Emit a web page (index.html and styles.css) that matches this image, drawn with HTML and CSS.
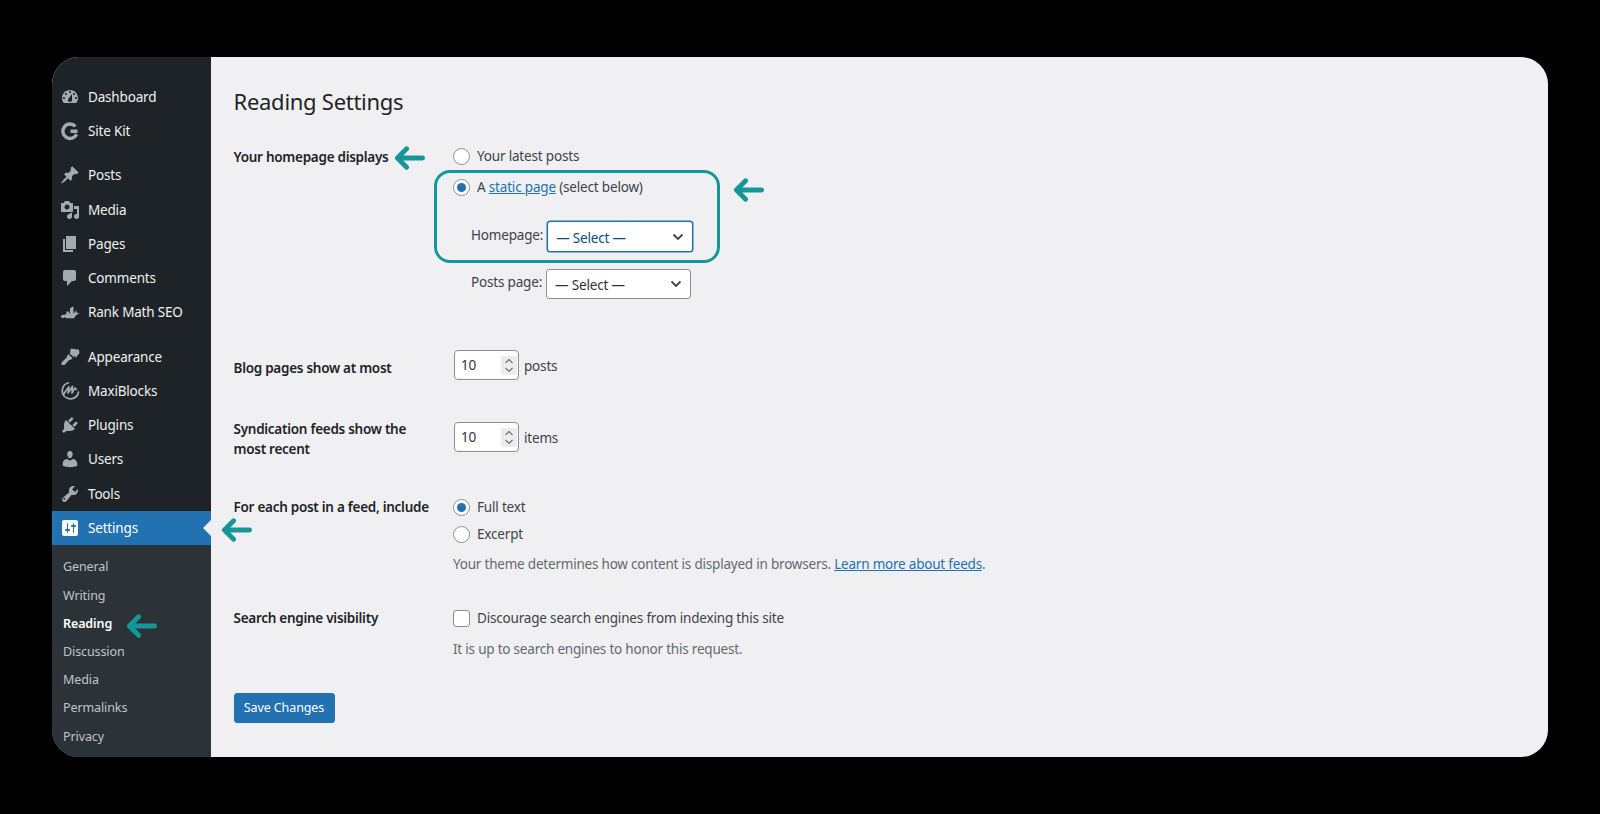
FILE: index.html
```html
<!DOCTYPE html>
<html lang="en">
<head>
<meta charset="utf-8">
<title>Reading Settings</title>
<link rel="stylesheet" href="styles.css">
</head>
<body>
<svg class="defs" width="0" height="0" aria-hidden="true">
  <symbol id="arrow" viewBox="0 0 32 26"><path d="M29.500 13H4M13 3.500L3.500 13l9.500 9.500" fill="none" stroke="currentColor" stroke-width="5" stroke-linecap="round" stroke-linejoin="round"/></symbol>
</svg>
<div class="window">
  <nav class="sidebar">
    <ul class="menu">
      <li class="item"><svg class="icon" viewBox="0 0 20 20"><path fill-rule="evenodd" d="M3.760 16h12.480c1.100-1.370 1.760-3.110 1.760-5 0-4.420-3.580-8-8-8s-8 3.580-8 8c0 1.890.66 3.630 1.760 5zM10 4c.55 0 1 .45 1 1s-.45 1-1 1-1-.45-1-1 .45-1 1-1zM6 6c.55 0 1 .45 1 1s-.45 1-1 1-1-.45-1-1 .45-1 1-1zm8 0c.55 0 1 .45 1 1s-.45 1-1 1-1-.45-1-1 .45-1 1-1zm-5.370 5.550L12 7v6c0 1.100-.9 2-2 2s-2-.9-2-2c0-.57.24-1.080.63-1.450zM4 10c.55 0 1 .45 1 1s-.45 1-1 1-1-.45-1-1 .45-1 1-1zm12 0c.55 0 1 .45 1 1s-.45 1-1 1-1-.45-1-1 .45-1 1-1z"/></svg>Dashboard</li>
      <li class="item"><svg class="icon" viewBox="0 0 20 20"><path class="stroke-g" d="M15.400 5.400A7.200 7.200 0 1 0 16.600 13.200M10.500 10.300H17.500"/></svg>Site Kit</li>
      <li class="item gap"><svg class="icon" viewBox="0 0 20 20"><path d="M10.440 3.020l1.820-1.820 6.360 6.350-1.830 1.820c-1.050-.68-2.480-.57-3.410.36l-.75.75c-.92.93-1.040 2.350-.35 3.410l-1.830 1.820-2.410-2.410-2.800 2.790c-.42.42-3.380 2.710-3.800 2.290s1.860-3.390 2.280-3.810l2.790-2.790L4.100 9.360l1.830-1.820c1.050.69 2.480.57 3.400-.36l.75-.75c.93-.92 1.050-2.350.36-3.410z"/></svg>Posts</li>
      <li class="item"><svg class="icon" viewBox="0 0 20 20"><path fill-rule="evenodd" d="M13 11V4c0-.55-.45-1-1-1h-1.670L9 1H5L3.670 3H2c-.55 0-1 .45-1 1v7c0 .55.45 1 1 1h10c.55 0 1-.45 1-1zM7 4.500c1.380 0 2.500 1.120 2.500 2.500S8.380 9.500 7 9.500 4.500 8.380 4.500 7 5.620 4.500 7 4.500zM14 6h5v10.500c0 1.380-1.120 2.500-2.500 2.500S14 17.880 14 16.500s1.120-2.500 2.500-2.500c.17 0 .34.020.5.050V9h-3V6zm-4 8.050V13h2v3.500c0 1.380-1.120 2.500-2.500 2.500S7 17.880 7 16.500 8.120 14 9.500 14c.17 0 .34.020.5.050z"/></svg>Media</li>
      <li class="item"><svg class="icon" viewBox="0 0 20 20"><path d="M6 15V2h10v13H6zm-1 1h8v2H3V5h2v11z"/></svg>Pages</li>
      <li class="item"><svg class="icon" viewBox="0 0 20 20"><path d="M5 2h9c1.100 0 2 .9 2 2v7c0 1.100-.9 2-2 2h-2l-5 5v-5H5c-1.100 0-2-.9-2-2V4c0-1.100.9-2 2-2z"/></svg>Comments</li>
      <li class="item"><svg class="icon" viewBox="0 0 20 20"><path d="M.5 14.500l2.500-2 1.500.5 2-1.500V9.500h2.500v2l1-.5V6.200l3.500-2v7.300l1.800-1.800.8-1.700.6 2.700L19.500 11l-3.500 2.200-2 3H6.500l-1.500-1-2.500 1z"/></svg>Rank Math SEO</li>
      <li class="item gap"><svg class="icon" viewBox="0 0 20 20"><path d="M11 1.500l8 1.200.5 3.300-3.500 4.500-1.200-.4.2-1.800-1.300 1.600-4.200-3.500L11 4.500l-1.200.3z"/><path d="M8.200 7.300l4.300 3.600-1.400 1.600c-.5.500-1.200.5-1.700.2l-.5 .6L5 17.500c-.6.700-3 .7-3.500 0-.4-.5-.3-1.500.3-2.300l4.800-4.600.3-.5c-.2-.5 0-1 .3-1.400z"/></svg>Appearance</li>
      <li class="item"><svg class="icon" viewBox="0 0 20 20"><path class="stroke-m" d="M4.500 15.500C.5 11 2 3.500 8.500 1.800M6 16.500c5 3 11.500.5 12.500-5.500M3.500 13.500C5.500 10.500 7.500 7 9 5.800L8 12l4.500-6.500L12 12l3-5 1.500 1.500"/></svg>MaxiBlocks</li>
      <li class="item"><svg class="icon" viewBox="0 0 20 20"><path d="M13.110 4.360L9.870 7.600 8 5.730l3.240-3.240c.35-.34 1.050-.2 1.560.32.52.51.66 1.210.31 1.550zm-8 1.770l.91-1.120 9.010 9.010-1.190.84c-.71.71-2.630 1.160-3.820 1.160H6.140L4.900 17.260c-.59.59-1.540.59-2.120 0-.59-.58-.59-1.530 0-2.120l1.240-1.240v-3.880c0-1.130.4-3.190 1.090-3.890zm7.260 3.970l3.240-3.240c.34-.35 1.040-.21 1.550.31.52.51.66 1.210.31 1.550l-3.240 3.250z"/></svg>Plugins</li>
      <li class="item"><svg class="icon" viewBox="0 0 20 20"><path d="M10 9.250c-2.270 0-2.730-3.440-2.730-3.440C7 4.020 7.820 2 9.970 2c2.160 0 2.980 2.020 2.710 3.810 0 0-.41 3.440-2.680 3.440zm0 2.570L12.720 10c2.390 0 4.520 2.330 4.520 4.530v2.490s-3.650 1.130-7.240 1.130c-3.650 0-7.240-1.130-7.240-1.130v-2.490c0-2.250 1.940-4.480 4.470-4.480z"/></svg>Users</li>
      <li class="item"><svg class="icon" viewBox="0 0 20 20"><path fill-rule="evenodd" d="M16.680 9.770c-1.340 1.340-3.300 1.670-4.950.99l-5.410 6.520c-.99.99-2.590.99-3.570 0-.99-.98-.99-2.580 0-3.570l6.520-5.420c-.68-1.650-.35-3.610.99-4.950 1.280-1.280 3.120-1.620 4.720-1.060l-2.890 2.890 2.820 2.820 2.860-2.870c.53 1.580.18 3.390-1.090 4.650zM4.850 15.400c.39-.39.39-1.030 0-1.420-.39-.39-1.030-.39-1.420 0-.39.39-.39 1.030 0 1.420.39.39 1.030.39 1.420 0z"/></svg>Tools</li>
      <li class="item current"><svg class="icon" viewBox="0 0 20 20"><path fill-rule="evenodd" d="M18 16V4c0-1.100-.9-2-2-2H4c-1.100 0-2 .9-2 2v12c0 1.100.9 2 2 2h12c1.100 0 2-.9 2-2zM8 11h1c.55 0 1 .45 1 1s-.45 1-1 1H8v1.500c0 .28-.22.5-.5.5s-.5-.22-.5-.5V13H6c-.55 0-1-.45-1-1s.45-1 1-1h1V5.500c0-.28.22-.5.5-.5s.5.22.5.5V11zm5-2h-1c-.55 0-1-.45-1-1s.45-1 1-1h1V5.500c0-.28.22-.5.5-.5s.5.22.5.5V7h1c.55 0 1 .45 1 1s-.45 1-1 1h-1v5.500c0 .28-.22.5-.5.5s-.5-.22-.5-.5V9z"/></svg>Settings</li>
    </ul>
    <ul class="submenu">
      <li>General</li>
      <li>Writing</li>
      <li class="on">Reading</li>
      <li>Discussion</li>
      <li>Media</li>
      <li>Permalinks</li>
      <li>Privacy</li>
    </ul>
  </nav>
  <main class="content">
    <h1 class="title">Reading Settings</h1>
    <form class="form">
      <div class="row r-home">
        <div class="th nudge">Your homepage displays</div>
        <div class="td">
          <label class="choice"><input type="radio" name="home">Your latest posts</label>
          <div class="focus-group">
            <label class="choice second"><input type="radio" name="home" checked><span>A <a href="#">static page</a> (select below)</span></label>
            <label class="pick first-pick"><span class="pick-label">Homepage:</span><select class="select focus"><option>— Select —</option></select></label>
            <span class="ring"></span>
          </div>
          <label class="pick"><span class="pick-label">Posts page:</span><select class="select"><option>— Select —</option></select></label>
        </div>
      </div>
      <div class="row r-blog">
        <div class="th down">Blog pages show at most</div>
        <div class="td"><span class="num"><span class="val">10</span><svg class="spin" viewBox="0 0 16 19"><path d="M4.500 7l3.500-3.500L11.500 7M4.500 12l3.500 3.500 3.500-3.500"/></svg></span><span class="unit">posts</span></div>
      </div>
      <div class="row r-feeds">
        <div class="th">Syndication feeds show the most recent</div>
        <div class="td feeds-td"><span class="num"><span class="val">10</span><svg class="spin" viewBox="0 0 16 19"><path d="M4.500 7l3.500-3.500L11.500 7M4.500 12l3.500 3.500 3.500-3.500"/></svg></span><span class="unit">items</span></div>
      </div>
      <div class="row r-each">
        <div class="th">For each post in a feed, include</div>
        <div class="td">
          <label class="choice"><input type="radio" name="feed" checked>Full text</label>
          <label class="choice excerpt"><input type="radio" name="feed">Excerpt</label>
          <p class="desc">Your theme determines how content is displayed in browsers. <a href="#">Learn more about feeds</a>.</p>
        </div>
      </div>
      <div class="row r-search">
        <div class="th nudge">Search engine visibility</div>
        <div class="td search-td">
          <label class="choice"><input type="checkbox">Discourage search engines from indexing this site</label>
          <p class="desc tall">It is up to search engines to honor this request.</p>
        </div>
      </div>
      <button class="save" type="button">Save Changes</button>
    </form>
  </main>
  <svg class="arrow a-home"><use href="#arrow"/></svg>
  <svg class="arrow a-static"><use href="#arrow"/></svg>
  <svg class="arrow a-settings"><use href="#arrow"/></svg>
  <svg class="arrow a-reading"><use href="#arrow"/></svg>
</div>
</body>
</html>
```
FILE: styles.css
```css
* { box-sizing: border-box; }
html, body { margin: 0; height: 100%; }
body {
  background: #000;
  padding: 57px 52px;
  font-family: "Noto Sans", "Open Sans", sans-serif;
  font-size: 13.500px;
  letter-spacing: -.18px;
  line-height: 20px;
  color: #3c434a;
  overflow: hidden;
}
.defs { position: absolute; }
.window {
  position: relative;
  display: flex;
  width: 1496px;
  height: 700px;
  border-radius: 27px;
  overflow: hidden;
  background: #f0f0f2;
}

/* sidebar */
.sidebar {
  width: 159px;
  flex: none;
  background: #1d2327;
  display: flex;
  flex-direction: column;
  padding-top: 22.500px;
}
.menu, .submenu { list-style: none; margin: 0; padding: 0; }
.item {
  position: relative;
  display: flex;
  align-items: center;
  height: 34.200px;
  padding-left: 8px;
  gap: 8px;
  color: #f0f0f1;
}
.item.gap { margin-top: 10.500px; }
.icon { width: 20px; height: 20px; flex: none; fill: #a7aaad; }
.stroke-g { fill: none; stroke: #a7aaad; stroke-width: 3.400; }
.stroke-m { fill: none; stroke: #a7aaad; stroke-width: 1.700; stroke-linecap: round; stroke-linejoin: round; }
.item.current { background: #2271b1; color: #fff; }
.item.current .icon { fill: #fff; }
.item.current::after {
  content: "";
  position: absolute;
  right: 0;
  top: 50%;
  margin-top: -8px;
  border: 8px solid transparent;
  border-right-color: #f0f0f2;
}
.submenu {
  flex: 1;
  background: #2c3338;
  padding: 8.500px 0 0 11px;
  font-size: 12.500px;
  letter-spacing: -.1px;
  color: #c3c4c7;
}
.submenu li { height: 28.200px; line-height: 28px; }
.submenu .on { color: #fff; font-weight: 600; }

/* content */
.content { flex: 1; padding: 29px 0 0 22.500px; }
.title {
  margin: 0;
  font-size: 22px;
  letter-spacing: -.27px;
  line-height: 30px;
  font-weight: 400;
  color: #1d2327;
}
.form { margin-top: 30px; }
.row { display: grid; grid-template-columns: 219.500px 1fr; }
.th { color: #1d2327; font-weight: 600; width: 205px; letter-spacing: -.27px; }
.nudge { padding-top: 1px; }
.down { padding-top: 8px; }
.feeds-td { padding-top: 3px; }
.search-td { padding-top: 1px; }
.r-blog { margin-top: 51px; }
.r-feeds { margin-top: 39px; }
.r-each { margin-top: 38px; }
.r-search { margin-top: 33px; }
.td a { color: #2271b1; }

.choice { display: flex; align-items: center; height: 20px; gap: 7px; }
.choice.excerpt { margin-top: 7px; }
.focus-group { position: relative; margin-top: 11px; }
.ring {
  position: absolute;
  left: -19px;
  top: -7px;
  width: 286px;
  height: 93px;
  border: 3px solid #15979a;
  border-radius: 16px;
  pointer-events: none;
}
input[type="radio"], input[type="checkbox"] {
  appearance: none;
  width: 17px;
  height: 17px;
  margin: 0;
  flex: none;
  background: #fff;
  border: 1px solid #8c8f94;
  display: grid;
  place-items: center;
}
input[type="radio"] { border-radius: 50%; }
input[type="checkbox"] { border-radius: 3px; }
input[type="radio"]:checked::before {
  content: "";
  width: 9px;
  height: 9px;
  border-radius: 50%;
  background: #2271b1;
}
.pick { display: flex; align-items: center; padding-left: 18px; gap: 4px; margin-top: 17px; height: 30px; }
.first-pick { margin-top: 24px; height: 31px; padding-left: 18px; }
.pick-label { margin-top: -4px; }
.select {
  appearance: none;
  width: 145px;
  height: 30px;
  padding: 2px 24px 0 8px;
  border: 1px solid #8c8f94;
  border-radius: 3px;
  background: #fff url("data:image/svg+xml,%3Csvg xmlns='http://www.w3.org/2000/svg' width='12' height='8' viewBox='0 0 12 8'%3E%3Cpath d='M1.500 1.500L6 6l4.500-4.500' fill='none' stroke='%233c434a' stroke-width='1.800'/%3E%3C/svg%3E") no-repeat right 8px center;
  font: inherit;
  letter-spacing: inherit;
  color: #2c3338;
}
.select.focus { width: 146px; height: 31px; border-color: #2271b1; box-shadow: 0 0 0 .5px #2271b1; color: #0a4b78; }
.num {
  display: inline-flex;
  align-items: center;
  justify-content: space-between;
  width: 65px;
  height: 30px;
  margin-left: 1px;
  padding: 0 1px 0 6px;
  background: #fff;
  border: 1px solid #8c8f94;
  border-radius: 4px;
  color: #2c3338;
  vertical-align: middle;
}
.spin { width: 16px; height: 19px; background: #ececf0; }
.spin path { fill: none; stroke: #6a6e73; stroke-width: 1.100; }
.unit { margin-left: 5px; vertical-align: middle; position: relative; top: 1px; }
.desc { margin: 10px 0 0; color: #646970; letter-spacing: -.21px; }
.desc.tall { margin-top: 11px; }
.save {
  display: block;
  margin-top: 34px;
  width: 101px;
  height: 30px;
  padding: 0;
  border: 1px solid #2271b1;
  border-radius: 3px;
  background: #2271b1;
  color: #fff;
  font: inherit;
  font-size: 12.500px;
  letter-spacing: -.1px;
}

/* annotations */
.arrow { position: absolute; width: 31px; height: 26px; color: #15979a; }
.a-home { left: 342px; top: 88px; }
.a-static { left: 681px; top: 120px; }
.a-settings { left: 169px; top: 460px; }
.a-reading { left: 74px; top: 556px; }
```
